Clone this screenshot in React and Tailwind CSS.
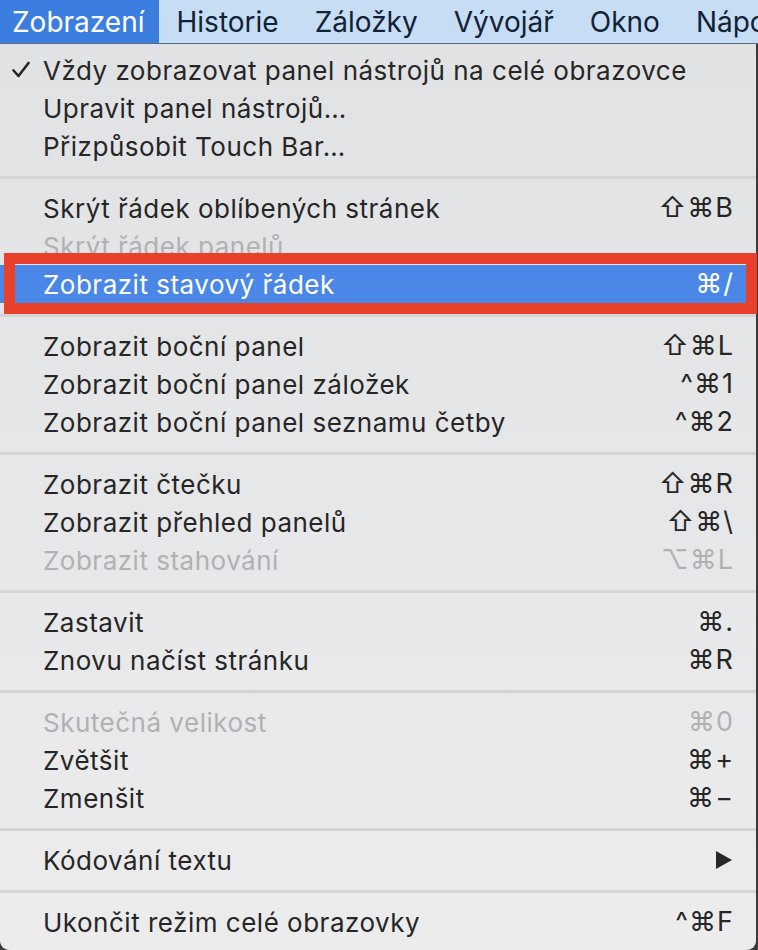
import React from "react";

const sections = [
  [
    { label: "Vždy zobrazovat panel nástrojů na celé obrazovce", checked: true },
    { label: "Upravit panel nástrojů…" },
    { label: "Přizpůsobit Touch Bar…" },
  ],
  [
    { label: "Skrýt řádek oblíbených stránek", keys: "⇧⌘B" },
    { label: "Skrýt řádek panelů", disabled: true },
    { label: "Zobrazit stavový řádek", keys: "⌘/", active: true },
  ],
  [
    { label: "Zobrazit boční panel", keys: "⇧⌘L" },
    { label: "Zobrazit boční panel záložek", keys: "^⌘1" },
    { label: "Zobrazit boční panel seznamu četby", keys: "^⌘2" },
  ],
  [
    { label: "Zobrazit čtečku", keys: "⇧⌘R" },
    { label: "Zobrazit přehled panelů", keys: "⇧⌘\\" },
    { label: "Zobrazit stahování", keys: "⌥⌘L", disabled: true },
  ],
  [
    { label: "Zastavit", keys: "⌘." },
    { label: "Znovu načíst stránku", keys: "⌘R" },
  ],
  [
    { label: "Skutečná velikost", keys: "⌘0", disabled: true },
    { label: "Zvětšit", keys: "⌘+" },
    { label: "Zmenšit", keys: "⌘−" },
  ],
  [{ label: "Kódování textu", submenu: true }],
  [{ label: "Ukončit režim celé obrazovky", keys: "^⌘F" }],
];

const menus = ["Historie", "Záložky", "Vývojář", "Okno", "Nápověda"];

const Check = () => (
  <svg width="20" height="20" viewBox="0 0 20 20" className="absolute left-[11px] top-[9px]">
    <path d="M2.5 10.5 L7.5 16 L17.5 3" fill="none" stroke="#262626" strokeWidth="2.6" strokeLinecap="round" strokeLinejoin="round" />
  </svg>
);

const Item = ({ item }) => {
  const color = item.active
    ? "text-white"
    : item.disabled
    ? "text-[#b1b1b3]"
    : "text-[#262626]";
  return (
    <div className={`relative flex h-[38px] items-center justify-between pl-[43px] pr-[22px] ${color} ${item.active ? "bg-[#4a87e6]" : ""}`}>
      {item.checked && <Check />}
      <span>{item.label}</span>
      {item.keys && <span className="text-[27px] tracking-[1px]">{item.keys}</span>}
      {item.submenu && (
        <svg width="20" height="20" viewBox="0 0 20 20" className="mr-[1px]">
          <path d="M3 1 L19 10 L3 19 Z" fill="#262626" />
        </svg>
      )}
      {item.active && (
        <div className="pointer-events-none absolute left-[4px] right-[-1px] top-[-12px] bottom-[-11px] border-[11px] border-[#e9402b]" />
      )}
    </div>
  );
};

export default function App() {
  return (
    <div
      className="w-[758px] h-[950px] overflow-hidden bg-[#3a3a3a] text-[26px] tracking-[0.5px]"
      style={{ fontFamily: "Inter, 'DejaVu Sans', sans-serif" }}
    >
      <div className="flex h-[44px] items-center bg-[#c6ddf3] border-b border-[#5a6b7c] text-[28px] tracking-[0px] text-[#122236] whitespace-nowrap overflow-hidden">
        <div className="flex h-full items-center bg-[#3c7de0] pl-[12px] pr-[14px] text-white">Zobrazení</div>
        {menus.map((m) => (
          <div key={m} className="px-[18px]">{m}</div>
        ))}
      </div>
      <div className="w-[756px] h-[906px] rounded-b-[9px] bg-gradient-to-b from-[#e1e2e4] to-[#ececed] pt-[7px] whitespace-nowrap">
        {sections.map((sec, i) => (
          <div key={i}>
            {i > 0 && (
              <div className="flex h-[24px] items-center">
                <div className="h-[3px] w-full bg-[#d3d4d6]" />
              </div>
            )}
            {sec.map((item) => (
              <Item key={item.label} item={item} />
            ))}
          </div>
        ))}
      </div>
    </div>
  );
}
